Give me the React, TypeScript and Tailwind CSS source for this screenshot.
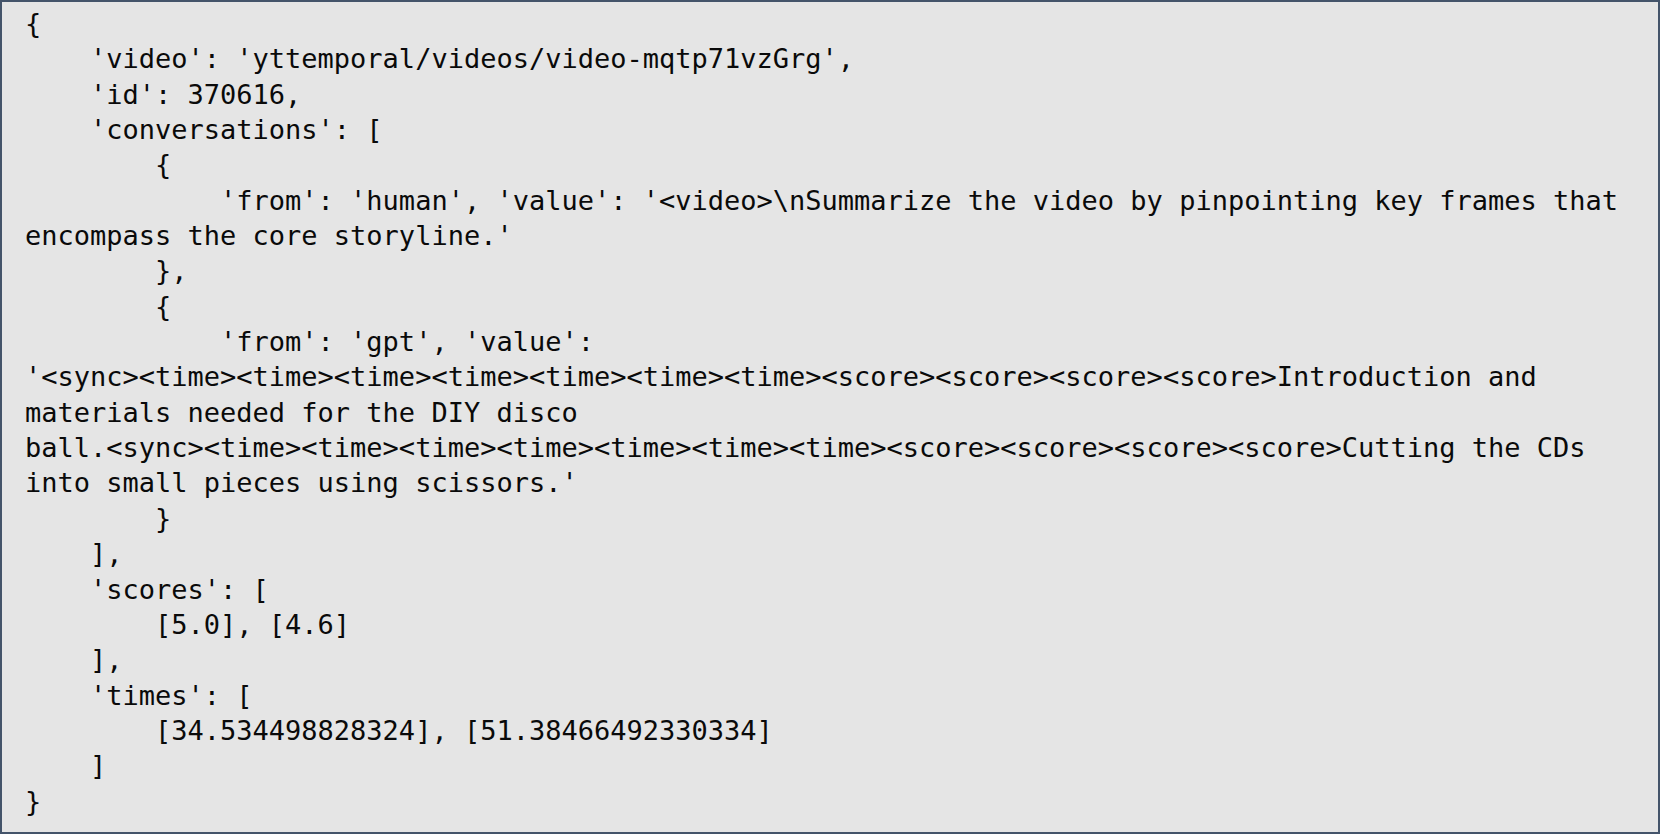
const lines = [
  "{",
  "    'video': 'yttemporal/videos/video-mqtp71vzGrg',",
  "    'id': 370616,",
  "    'conversations': [",
  "        {",
  "            'from': 'human', 'value': '<video>\\nSummarize the video by pinpointing key frames that",
  "encompass the core storyline.'",
  "        },",
  "        {",
  "            'from': 'gpt', 'value':",
  "'<sync><time><time><time><time><time><time><time><score><score><score><score>Introduction and",
  "materials needed for the DIY disco",
  "ball.<sync><time><time><time><time><time><time><time><score><score><score><score>Cutting the CDs",
  "into small pieces using scissors.'",
  "        }",
  "    ],",
  "    'scores': [",
  "        [5.0], [4.6]",
  "    ],",
  "    'times': [",
  "        [34.534498828324], [51.38466492330334]",
  "    ]",
  "}",
]

export default function App() {
  return (
    <div className="h-[834px] w-[1660px] bg-white">
      <div className="box-border h-full w-full border-2 border-[#44546a] bg-[#e5e5e5] pl-[23px] pt-[4px]">
        <pre className="m-0 font-['DejaVu_Sans_Mono','Liberation_Mono',monospace] text-[27px] leading-[35.35px] text-[#0a0a0a]">
          {lines.map((line, i) => (
            <div key={i} className="whitespace-pre">
              {line}
            </div>
          ))}
        </pre>
      </div>
    </div>
  )
}
